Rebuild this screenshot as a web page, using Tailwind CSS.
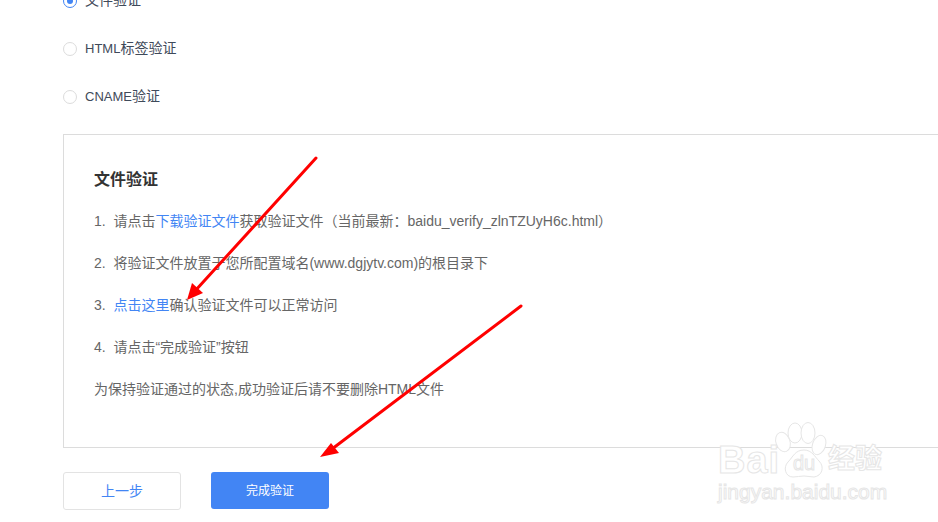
<!DOCTYPE html>
<html lang="en">
<head>
  <meta charset="UTF-8" />
  <title>文件验证</title>
  <script src="https://cdn.jsdelivr.net/npm/@tailwindcss/browser@4"></script>
</head>
<body class="bg-white h-[522px] overflow-hidden relative font-['Liberation_Sans','Noto_Sans_CJK_SC',sans-serif] text-[14px] text-[#4b5563]">

  <div class="-mt-[23px] pl-[63px]">
    <!-- Radio options -->
    <div class="h-[48px] flex items-center gap-[8px] text-[#3f4a5a]">
      <span class="w-[14px] h-[14px] rounded-full border border-[#4285f4] flex items-center justify-center"><span class="w-[6px] h-[6px] rounded-full bg-[#4285f4]"></span></span>
      <span class="-mt-[2px]">文件验证</span>
    </div>
    <div class="h-[48px] flex items-center gap-[8px] text-[#3f4a5a]">
      <span class="w-[14px] h-[14px] rounded-full border border-[#dcdcdc]"></span>
      <span class="-mt-[2px]"><span class="text-[13px]">HTML</span>标签验证</span>
    </div>
    <div class="h-[48px] flex items-center gap-[8px] text-[#3f4a5a]">
      <span class="w-[14px] h-[14px] rounded-full border border-[#dcdcdc]"></span>
      <span class="-mt-[2px]"><span class="text-[13px]">CNAME</span>验证</span>
    </div>

    <!-- Verify panel -->
    <div class="mt-[13px] h-[314px] border border-r-0 border-[#dcdcdc] pl-[30px] pt-[31px] text-[#666666]">
      <h2 class="text-[16px] leading-[28px] font-bold text-[#333333]">文件验证</h2>
      <p class="mt-[6px] leading-[42px] whitespace-nowrap">1.&nbsp; 请点击<span class="text-[#4285f4]">下载验证文件</span>获取验证文件（当前最新：baidu_verify_zlnTZUyH6c.html）</p>
      <p class="leading-[42px] whitespace-nowrap">2.&nbsp; 将验证文件放置于您所配置域名(www.dgjytv.com)的根目录下</p>
      <p class="leading-[42px] whitespace-nowrap">3.&nbsp; <span class="text-[#4285f4]">点击这里</span>确认验证文件可以正常访问</p>
      <p class="leading-[42px] whitespace-nowrap">4.&nbsp; 请点击“完成验证”按钮</p>
      <p class="leading-[42px] whitespace-nowrap">为保持验证通过的状态,成功验证后请不要删除HTML文件</p>
    </div>

    <!-- Buttons -->
    <div class="mt-[24px] flex gap-[30px]">
      <button class="w-[118px] h-[38px] rounded-[3px] border border-[#e3e3e3] bg-white text-[14px] text-[#4285f4]">上一步</button>
      <button class="w-[118px] h-[37px] rounded-[3px] bg-[#4285f4] text-[12px] text-white">完成验证</button>
    </div>
  </div>

  <!-- Watermark -->
  <div class="absolute left-[718px] top-[420px] w-[200px] h-[90px] text-white pointer-events-none">
    <svg class="absolute left-0 top-0" width="200" height="62" viewBox="0 0 200 62" fill="#fff" stroke="#e6e6e6" stroke-width="1">
      <ellipse cx="65" cy="22" rx="7" ry="10" transform="rotate(-20 65 22)" />
      <ellipse cx="77" cy="13" rx="7" ry="10" />
      <ellipse cx="90" cy="13" rx="7" ry="10.5" />
      <ellipse cx="101" cy="25" rx="6.5" ry="10" transform="rotate(20 101 25)" />
      <path d="M75 57c-8 0-10-10-5-15 5-5 7-12 16-12 8 0 11 7 15 11 6 6 3 15-5 16-3 0-7-1-10-1-4 0-7 1-11 1z" />
    </svg>
    <span class="absolute left-0 top-[18px] text-[38px] leading-[44px] font-bold tracking-[1px] [-webkit-text-stroke:1px_#e6e6e6]">Bai</span>
    <span class="absolute left-[75px] top-[31px] text-[20px] leading-[24px] [-webkit-text-stroke:1px_#e6e6e6]">du</span>
    <span class="absolute left-[110px] top-[21px] text-[27px] leading-[36px] font-bold [-webkit-text-stroke:1px_#e6e6e6]">经验</span>
    <span class="absolute left-0 top-[60px] text-[21px] leading-[24px] whitespace-nowrap [-webkit-text-stroke:1px_#e6e6e6]">jingyan.baidu.com</span>
  </div>

  <!-- Red annotation arrows -->
  <svg class="absolute left-0 top-0 pointer-events-none" width="938" height="522" viewBox="0 0 938 522">
    <line x1="316" y1="158" x2="195" y2="291" stroke="#ff0000" stroke-width="3" stroke-linecap="round" />
    <polygon points="187,300 192,283 203,293" fill="#ff0000" />
    <line x1="521" y1="306" x2="332" y2="449" stroke="#ff0000" stroke-width="3" stroke-linecap="round" />
    <polygon points="320,457 331,443 339,453" fill="#ff0000" />
  </svg>
</body>
</html>
